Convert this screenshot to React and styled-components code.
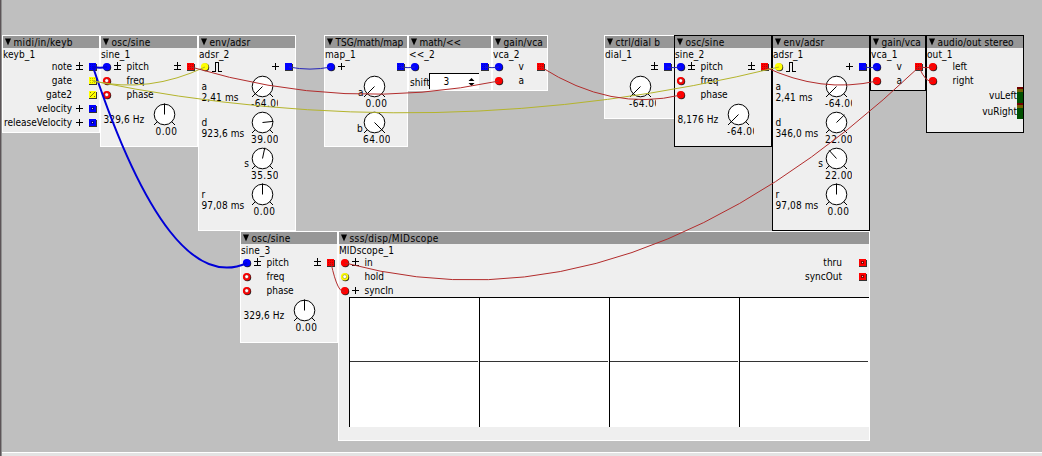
import React from 'react';
import styled, { createGlobalStyle } from 'styled-components';

const Global = createGlobalStyle`
  body { margin: 0; background: #bfbfbf; overflow: hidden; }
`;

const Patch = styled.main`
  position: relative;
  box-sizing: border-box;
  width: 1042px;
  height: 456px;
  overflow: hidden;
  background: #bfbfbf;
  border-left: 1px solid #5c5457;
  box-shadow: inset 1px 0 #8f8f8f;
  font: 10px/12px 'DejaVu Sans Condensed', 'DejaVu Sans', sans-serif;
  font-stretch: condensed;
  color: #000;

  svg { flex-shrink: 0; }
`;

const Footer = styled.div`
  position: absolute;
  left: 1px;
  right: 0;
  bottom: 0;
  height: 3px;
  border-top: 1px solid #fff;
  background: #e3e3e3;
`;

const Module = styled.section`
  position: absolute;
  left: ${(p) => p.$x - 1}px;
  top: ${(p) => p.$y}px;
  width: ${(p) => p.$w}px;
  height: ${(p) => p.$h}px;
  box-sizing: border-box;
  border: 1px solid ${(p) => (p.$selected ? '#000' : '#fff')};
  background: #efefef;
  overflow: hidden;
`;

const Header = styled.header`
  display: flex;
  align-items: center;
  height: 12px;
  padding-left: 2px;
  gap: 2.5px;
  background: #979797;
  white-space: nowrap;
  line-height: 14px;
`;

const Title = styled.span`
  padding-top: 1px;
  letter-spacing: ${(p) => p.$ls}px;
`;

const Name = styled.div`
  height: 12px;
  line-height: 13px;
  white-space: nowrap;
  letter-spacing: 0.1px;
`;

const Row = styled.div`
  display: flex;
  align-items: center;
  justify-content: space-between;
  height: 14px;
  padding: 0 1px;
`;

const Side = styled.div`
  display: flex;
  align-items: center;
  flex-shrink: 0;
  height: 14px;
`;

const Sign = styled.span`
  display: flex;
  flex-shrink: 0;
  width: ${(p) => (p.$out ? 8 : 9)}px;
  margin: 0 ${(p) => (p.$out ? '4px 0 4px' : '3.5px 0 2px')};
`;

const OutletGap = styled.span`
  flex-shrink: 0;
  width: ${(p) => (p.$wide ? 16 : 0)}px;
`;

const Label = styled.span`
  white-space: nowrap;
`;

const KnobArea = styled.div`
  display: flex;
  height: 36px;
  padding-left: ${(p) => p.$pad}px;
`;

const Reading = styled.div`
  display: flex;
  flex-direction: column;
  align-items: ${(p) => (p.$end ? 'flex-end' : 'flex-start')};
  width: ${(p) => p.$w}px;
  padding-top: ${(p) => p.$top}px;
  padding-right: ${(p) => (p.$end ? 1 : 0)}px;
  box-sizing: border-box;
  flex-shrink: 0;
  line-height: 11px;
  white-space: nowrap;
  letter-spacing: 0.1px;
`;

const KnobBox = styled.div`
  width: 28px;
  height: 36px;
  flex-shrink: 0;
  overflow: hidden;

  svg { display: block; }
`;

const KnobValue = styled.div`
  height: 12px;
  padding-left: 1px;
  text-align: center;
  letter-spacing: 0.45px;
`;

const ShiftRow = styled.div`
  display: flex;
  align-items: flex-start;
  height: 17px;
  line-height: 16px;
  padding-left: 1px;
`;

const Spinner = styled.div`
  display: flex;
  align-items: center;
  justify-content: space-between;
  box-sizing: border-box;
  width: 50px;
  height: 16px;
  padding: 0 4px 0 13.5px;
  margin-top: -1px;
  border-left: 1px solid #000;
  border-top: 1px solid #000;
  background: #fff;
`;

const Meters = styled.div`
  margin-top: -1px;
`;

const Meter = styled.div`
  display: flex;
  justify-content: flex-end;
  align-items: flex-start;
  height: 16px;
  line-height: 17px;
`;

const MeterBar = styled.i`
  width: 6px;
  height: 16px;
  background: linear-gradient(#700000 0 2px, #706000 2px 5px, #005000 5px);
`;

const Scope = styled.div`
  display: grid;
  grid-template-columns: repeat(4, 130px);
  grid-template-rows: 64px 65px;
  margin: -1px 0 0 10px;
  width: 520px;
  overflow: hidden;
  border-top: 1px solid #000;
`;

const Cell = styled.div`
  box-sizing: border-box;
  padding-right: 1px;
  background: #fff;
  border-left: 1px solid #000;
`;

const CellLine = styled.div`
  height: 63px;
  border-bottom: 1px solid #333;
`;

const Wires = styled.svg`
  position: absolute;
  left: -1px;
  top: 0;
  pointer-events: none;
`;

const COLORS = { b: '#0000ff', r: '#ff0000', y: '#ffff00' };
const DARK = { b: '#0000a0', r: '#900000', y: '#807800' };

function Inlet({ color, open }) {
  return (
    <svg width="10" height="10" viewBox="0 0 10 10">
      <circle cx="5.4" cy="5.4" r="3.8" fill="#222" />
      <circle cx="4.7" cy="4.7" r="3.8" fill={COLORS[color]} />
      {open && <circle cx="4.7" cy="4.7" r="1.9" fill="#fff" stroke={DARK[color]} strokeWidth="0.5" />}
    </svg>
  );
}

function Outlet({ color, open, wired }) {
  return (
    <svg width="10" height="10" viewBox="0 0 10 10" shapeRendering="crispEdges">
      <rect x="1" y="2" width="8" height="7" fill="#333" />
      <rect x="1" y="1" width="7" height="7" fill={COLORS[color]} />
      {wired && (
        <path
          d="M2 2h1v1h-1zM4 2h1v1h-1zM6 2h1v1h-1zM2 4h1v1h-1zM4 4h1v1h-1zM6 4h1v1h-1zM2 6h1v1h-1zM4 6h1v1h-1zM6 6h1v1h-1z"
          fill={DARK[color]}
          opacity=".5"
        />
      )}
      {open && color === 'y' && <path d="M2 2h1v1h-1zM6 2h1v1h-1zM5 3h1v1h-1zM4 4h1v1h-1zM3 5h1v1h-1zM2 6h1v1h-1zM6 6h1v1h-1z" fill={DARK.y} />}
      {open && color !== 'y' && (
        <>
          <rect x="3" y="3" width="3" height="3" fill={DARK[color]} />
          <rect x="4" y="4" width="1" height="1" fill="#ccc" />
        </>
      )}
    </svg>
  );
}

function SignMark({ kind }) {
  if (kind === 'pulse')
    return (
      <svg width="10" height="12" viewBox="0 0 10 12" shapeRendering="crispEdges">
        <path d="M0 10.5h3.5v-9h3v9H10" fill="none" stroke="#000" />
      </svg>
    );
  return (
    <svg width="8" height="10" viewBox="0 0 8 10" shapeRendering="crispEdges">
      <path d={kind === '±' ? 'M0 3.5h7M3.5 0v7M0 7.5h7' : 'M0 4.5h7M3.5 1v7'} fill="none" stroke="#000" />
    </svg>
  );
}

function PortRow({ left, right }) {
  return (
    <Row>
      <Side>
        {left && (
          <>
            <Inlet {...left} />
            {(left.sign || left.label) && <Sign>{left.sign && <SignMark kind={left.sign} />}</Sign>}
            <Label>{left.label}</Label>
          </>
        )}
      </Side>
      <Side>
        {right && (
          <>
            <Label>{right.label}</Label>
            {right.sign ? (
              <Sign $out>
                <SignMark kind={right.sign} />
              </Sign>
            ) : (
              <OutletGap $wide={!!right.label} />
            )}
            <Outlet {...right} />
          </>
        )}
      </Side>
    </Row>
  );
}

function Knob({ angle, value }) {
  const a = (angle * Math.PI) / 180;
  return (
    <KnobBox>
      <svg width="28" height="24" viewBox="0 0 28 24">
        <circle cx="12.5" cy="12.5" r="10.3" fill="#fff" stroke="#000" />
        <path
          d={`M12.5 12.5L${12.5 + 11 * Math.sin(a)} ${12.5 - 11 * Math.cos(a)}M5.4 19.6L2 23M19.6 19.6L23 23`}
          stroke="#000"
        />
      </svg>
      <KnobValue>{value}</KnobValue>
    </KnobBox>
  );
}

function Box({ x, y = 35, w, h, selected, title, name, ls = 0.3, children }) {
  return (
    <Module $x={x} $y={y} $w={w} $h={h} $selected={selected}>
      <Header>
        <svg width="6" height="8" viewBox="0 0 6 8">
          <path d="M0 0.5h6L3 7.5z" />
        </svg>
        <Title $ls={ls}>{title}</Title>
      </Header>
      <Name>{name}</Name>
      {children}
    </Module>
  );
}

function Sine({ x, y, name, selected, hz, angle, value, phaseOpen = true }) {
  return (
    <Box x={x} y={y} w={98} h={112} selected={selected} title="osc/sine" name={name}>
      <PortRow left={{ color: 'b', sign: '±', label: 'pitch' }} right={{ color: 'r', sign: '±', wired: true }} />
      <PortRow left={{ color: 'r', open: true, label: 'freq' }} />
      <PortRow left={{ color: 'r', open: phaseOpen, label: 'phase' }} />
      <KnobArea $pad={2.5}>
        <Reading $w={48.5} $top={12}>{hz}</Reading>
        <Knob angle={angle} value={value} />
      </KnobArea>
    </Box>
  );
}

function Adsr({ x, name, selected, stages }) {
  return (
    <Box x={x} w={98} h={196} selected={selected} title="env/adsr" ls={0.2} name={name}>
      <PortRow left={{ color: 'y', sign: 'pulse' }} right={{ color: 'b', sign: '+' }} />
      {stages.map((s) => (
        <KnobArea $pad={2.5} key={s.label}>
          {s.time ? (
            <Reading $w={48.5} $top={7}>
              <span>{s.label}</span>
              <span>{s.time}</span>
            </Reading>
          ) : (
            <Reading $w={48.5} $top={12} $end>{s.label}</Reading>
          )}
          <Knob angle={s.angle} value={s.value} />
        </KnobArea>
      ))}
    </Box>
  );
}

function Vca({ x, name, selected }) {
  return (
    <Box x={x} w={56} h={56} selected={selected} title="gain/vca" ls={0.15} name={name}>
      <PortRow left={{ color: 'b', label: 'v' }} right={{ color: 'r', wired: true }} />
      <PortRow left={{ color: 'r', label: 'a' }} />
    </Box>
  );
}

// x1, y1, x2, y2, signal colour, width
const WIRES = [
  [93, 67, 107, 67, 'b', 2],
  [93, 67, 247, 263, 'b', 2],
  [93, 81, 205, 67, 'y'],
  [93, 81, 779, 67, 'y'],
  [191, 67, 499, 81, 'r'],
  [289, 67, 331, 67, 'b'],
  [401, 67, 415, 67, 'b'],
  [485, 67, 499, 67, 'b'],
  [541, 67, 681, 95, 'r'],
  [667, 67, 681, 67, 'b'],
  [765, 67, 877, 81, 'r'],
  [863, 67, 877, 67, 'b'],
  [919, 67, 933, 67, 'r'],
  [919, 67, 933, 81, 'r'],
  [919, 67, 345, 263, 'r'],
  [331, 263, 345, 291, 'r'],
];

const WIRE_COLORS = { b: '#2424b8', r: '#b22c2c', y: '#b4b42c' };

// Cables sag below their lower end in proportion to their span.
function wirePath([x1, y1, x2, y2]) {
  const cy = Math.max(y1, y2) + Math.abs(y2 - y1) * 0.1 + Math.abs(x2 - x1) * 0.1;
  return `M${x1} ${y1}Q${(x1 + x2) / 2} ${cy} ${x2} ${y2}`;
}

export default function App() {
  return (
    <Patch>
      <Global />
      <Box x={2} w={98} h={98} title="midi/in/keyb" ls={0.35} name="keyb_1">
        <PortRow right={{ color: 'b', sign: '±', label: 'note', wired: true }} />
        <PortRow right={{ color: 'y', label: 'gate', wired: true }} />
        <PortRow right={{ color: 'y', label: 'gate2', open: true }} />
        <PortRow right={{ color: 'b', sign: '+', label: 'velocity', open: true }} />
        <PortRow right={{ color: 'b', sign: '+', label: 'releaseVelocity', open: true }} />
      </Box>
      <Sine x={100} name="sine_1" hz="329,6 Hz" angle={0} value="0.00" />
      <Adsr
        x={198}
        name="adsr_2"
        stages={[
          { label: 'a', time: '2,41 ms', angle: -135, value: '-64.00' },
          { label: 'd', time: '923,6 ms', angle: 84, value: '39.00' },
          { label: 's', angle: 12, value: '35.50' },
          { label: 'r', time: '97,08 ms', angle: 0, value: '0.00' },
        ]}
      />
      <Box x={324} w={84} h={112} title="TSG/math/map" ls={0} name="map_1">
        <PortRow left={{ color: 'b', sign: '+' }} right={{ color: 'b', wired: true }} />
        <KnobArea $pad={33}>
          <Reading $w={4} $top={13}>a</Reading>
          <Knob angle={-135} value="0.00" />
        </KnobArea>
        <KnobArea $pad={32}>
          <Reading $w={5} $top={13}>b</Reading>
          <Knob angle={135} value="64.00" />
        </KnobArea>
      </Box>
      <Box x={408} w={84} h={56} title="math/<<" ls={0} name="<<_2">
        <PortRow left={{ color: 'b' }} right={{ color: 'b', wired: true }} />
        <ShiftRow>
          <Reading $w={19} $top={3}>shift</Reading>
          <Spinner>
            3
            <svg width="7" height="8" viewBox="0 0 7 8">
              <path d="M0.5 3h6L3.5 0zM0.5 5h6L3.5 8z" />
            </svg>
          </Spinner>
        </ShiftRow>
      </Box>
      <Vca x={492} name="vca_2" />
      <Box x={604} w={71} h={84} title="ctrl/dial b" ls={0.2} name="dial_1">
        <PortRow right={{ color: 'b', sign: '±' }} />
        <KnobArea $pad={23}>
          <Knob angle={-135} value="-64.00" />
        </KnobArea>
      </Box>
      <Sine x={674} name="sine_2" selected hz="8,176 Hz" angle={-135} value="-64.00" phaseOpen={false} />
      <Adsr
        x={772}
        name="adsr_1"
        selected
        stages={[
          { label: 'a', time: '2,41 ms', angle: -135, value: '-64.00' },
          { label: 'd', time: '346,0 ms', angle: 46, value: '22.00' },
          { label: 's', angle: -42, value: '22.00' },
          { label: 'r', time: '97,08 ms', angle: 0, value: '0.00' },
        ]}
      />
      <Vca x={870} name="vca_1" selected />
      <Box x={926} w={98} h={98} selected title="audio/out stereo" ls={0.15} name="out_1">
        <PortRow left={{ color: 'r', label: 'left' }} />
        <PortRow left={{ color: 'r', label: 'right' }} />
        <Meters>
          <Meter>vuLeft<MeterBar /></Meter>
          <Meter>vuRight<MeterBar /></Meter>
        </Meters>
      </Box>
      <Sine x={240} y={231} name="sine_3" hz="329,6 Hz" angle={0} value="0.00" />
      <Box x={338} y={231} w={532} h={210} title="sss/disp/MIDscope" ls={0.4} name="MIDscope_1">
        <PortRow left={{ color: 'r', sign: '±', label: 'in' }} right={{ color: 'r', label: 'thru', open: true }} />
        <PortRow left={{ color: 'y', label: 'hold', open: true }} right={{ color: 'r', label: 'syncOut', open: true }} />
        <PortRow left={{ color: 'r', sign: '+', label: 'syncIn' }} />
        <Scope>
          {[0, 1, 2, 3, 4, 5, 6, 7].map((i) => (
            <Cell key={i}>{i < 4 && <CellLine />}</Cell>
          ))}
        </Scope>
      </Box>
      <Wires width="1042" height="456" viewBox="0 0 1042 456" fill="none">
        {WIRES.map((w, i) => (
          <path key={i} d={wirePath(w)} stroke={w[5] ? '#0000d8' : WIRE_COLORS[w[4]]} strokeWidth={w[5] || 1} />
        ))}
      </Wires>
      <Footer />
    </Patch>
  );
}
